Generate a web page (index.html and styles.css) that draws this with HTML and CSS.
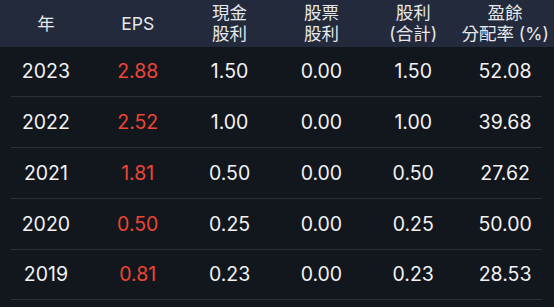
FILE: index.html
```html
<!DOCTYPE html>
<html lang="zh-Hant">
<head>
<meta charset="utf-8">
<link rel="stylesheet" href="styles.css">
</head>
<body>
<div class="table">
  <div class="head">
    <div class="cell">年</div>
    <div class="cell">EPS</div>
    <div class="cell">現金<br>股利</div>
    <div class="cell">股票<br>股利</div>
    <div class="cell">股利<br>(合計)</div>
    <div class="cell">盈餘<br>分配率 (%)</div>
  </div>
  <div class="row"><div class="grid">
    <div class="cell">2023</div><div class="cell red">2.88</div><div class="cell">1.50</div><div class="cell">0.00</div><div class="cell">1.50</div><div class="cell">52.08</div>
  </div></div>
  <div class="row"><div class="grid">
    <div class="cell">2022</div><div class="cell red">2.52</div><div class="cell">1.00</div><div class="cell">0.00</div><div class="cell">1.00</div><div class="cell">39.68</div>
  </div></div>
  <div class="row"><div class="grid">
    <div class="cell">2021</div><div class="cell red">1.81</div><div class="cell">0.50</div><div class="cell">0.00</div><div class="cell">0.50</div><div class="cell">27.62</div>
  </div></div>
  <div class="row"><div class="grid">
    <div class="cell">2020</div><div class="cell red">0.50</div><div class="cell">0.25</div><div class="cell">0.00</div><div class="cell">0.25</div><div class="cell">50.00</div>
  </div></div>
  <div class="row"><div class="grid">
    <div class="cell">2019</div><div class="cell red">0.81</div><div class="cell">0.23</div><div class="cell">0.00</div><div class="cell">0.23</div><div class="cell">28.53</div>
  </div></div>
</div>
</body>
</html>
```
FILE: styles.css
```css
html, body {
  margin: 0;
  padding: 0;
  background: #12161d;
  overflow: hidden;
}
body {
  width: 554px;
  height: 307px;
  font-family: Inter, "Noto Sans CJK TC", sans-serif;
  color: #ececec;
}
.table {
  display: flex;
  flex-direction: column;
}
.head {
  height: 46.5px;
  background: #222a3b;
  display: grid;
  grid-template-columns: repeat(6, 1fr);
  padding-right: 3px;
  align-items: center;
  font-size: 17.5px;
  line-height: 21px;
  color: #e6e8ec;
}
.row {
  height: 50.75px;
  box-sizing: border-box;
  margin: 0 12px 0 11px;
  border-bottom: 1px solid #2b303a;
  display: flex;
}
.grid {
  flex: 1;
  margin: 0 -9px 0 -11px;
  display: grid;
  grid-template-columns: repeat(6, 1fr);
  align-items: center;
  font-size: 19.5px;
  color: #f2f2f2;
}
.cell {
  text-align: center;
  white-space: nowrap;
}
.red {
  color: #ee4534;
}
```
